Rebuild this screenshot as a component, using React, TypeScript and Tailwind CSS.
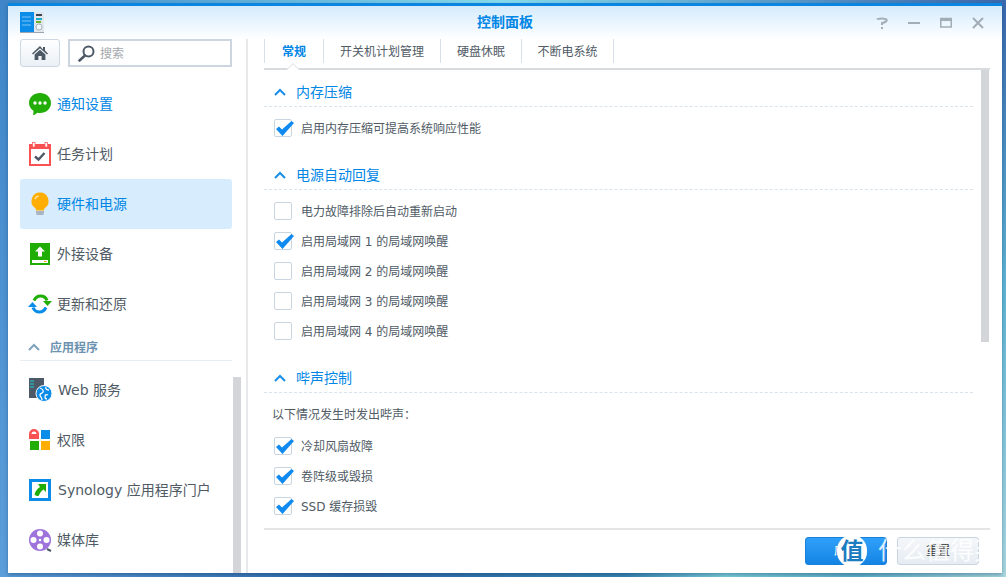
import React from "react";

const Chevron = ({ className }: { className: string }) => (
  <svg width="12" height="8" viewBox="0 0 12 8" className={className} fill="none">
    <path d="M1 7L6 2l5 5" stroke="currentColor" strokeWidth="2" />
  </svg>
);

const Logo = () => (
  <svg width="24" height="21" viewBox="0 0 24 21" className="-ml-[6px]">
    <rect x="0" y="0" width="24" height="21" fill="#dfe6ec" />
    <rect x="0" y="0" width="14" height="20" fill="#0a8ce8" />
    <path d="M2 5h9M2 9h9M2 13h9" stroke="#7cc4f6" />
    <path d="M16 3h6" stroke="#3b4652" strokeWidth="2" />
    <path d="M16 7h6" stroke="#18a8c8" strokeWidth="2" />
    <path d="M16 10h5" stroke="#6cb02c" strokeWidth="2" />
    <circle cx="19" cy="15" r="3" fill="#f4f7fa" stroke="#aab4bd" />
    <rect x="0" y="20" width="24" height="1" fill="#9ba6b0" />
  </svg>
);

const HomeIcon = () => (
  <svg width="16" height="16" viewBox="0 0 16 16" fill="#4d5966">
    <path d="M8 1L0 8.400l1 1L8 3.200l7 6.200 1-1-3-2.800V2h-2v2.400z" />
    <path d="M2.600 9.600L8 4.800l5.400 4.800V15H9.600v-4H6.400v4H2.600z" />
  </svg>
);

const SearchIcon = () => (
  <svg width="17" height="17" viewBox="0 0 17 17" fill="none">
    <circle cx="10.500" cy="6.500" r="5" stroke="#4d5966" strokeWidth="2" />
    <path d="M7 10.500L1.500 15.500" stroke="#4d5966" strokeWidth="2.600" strokeLinecap="round" />
  </svg>
);

const Bubble = () => (
  <svg width="24" height="24" viewBox="0 0 24 24">
    <path d="M12 1c6 0 11 4 11 10s-5 10-11 10c-1 0-2 0-3-.3C8 22 6 23 5 23.300c.4-1.200.6-3 .4-4.500C2.800 17 1 14.200 1 11 1 5 6 1 12 1z" fill="#22ad08" />
    <circle cx="7" cy="11" r="1.700" fill="#fff" /><circle cx="12" cy="11" r="1.700" fill="#fff" /><circle cx="17" cy="11" r="1.700" fill="#fff" />
  </svg>
);

const Calendar = () => (
  <svg width="24" height="24" viewBox="0 0 24 24">
    <rect x="1" y="2" width="22" height="22" fill="#fa5252" />
    <rect x="3" y="7" width="18" height="15" fill="#fff" />
    <rect x="4.500" y="0.500" width="2.500" height="4.500" fill="#fff" stroke="#fa5252" strokeWidth="0.700" />
    <rect x="17" y="0.500" width="2.500" height="4.500" fill="#fff" stroke="#fa5252" strokeWidth="0.700" />
    <path d="M7 14.500l3.500 3 6-6.500" stroke="#4d5966" strokeWidth="2.400" fill="none" />
  </svg>
);

const Bulb = () => (
  <svg width="24" height="24" viewBox="0 0 24 24">
    <path d="M12 0.500a8.500 8.500 0 0 0-5 15.400c.8.700 1 1.600 1 2.600h8c0-1 .2-1.900 1-2.600A8.500 8.500 0 0 0 12 .500z" fill="#ffae00" />
    <path d="M7 7c.6-1.700 2-2.700 3.500-3" stroke="#ffe7a8" strokeWidth="1.500" fill="none" />
    <path d="M8 20h8M8.500 22h7" stroke="#9aa3ad" strokeWidth="1.300" />
  </svg>
);

const External = () => (
  <svg width="24" height="24" viewBox="0 0 24 24">
    <rect x="2" y="1" width="20" height="22" fill="#20ad06" />
    <path d="M12 4.500l5 5h-3v5h-4v-5H7z" fill="#fff" />
    <rect x="4" y="18" width="16" height="3" fill="#fff" />
    <rect x="16" y="19" width="2.500" height="1" fill="#f0a000" />
  </svg>
);

const Sync = () => (
  <svg width="24" height="24" viewBox="0 0 24 24" fill="none">
    <path d="M6 8.500C7.500 5.500 10 4 12.500 4c3 0 5.500 1.700 6.500 4.500" stroke="#20ad06" strokeWidth="3" />
    <path d="M15 9h9l-4.500 5z" fill="#20ad06" />
    <path d="M18 15.500C16.500 18.500 14 20 11.500 20c-3 0-5.500-1.700-6.500-4.500" stroke="#0a8ce8" strokeWidth="3" />
    <path d="M0 15h9l-4.500-5z" fill="#0a8ce8" />
  </svg>
);

const WebIcon = () => (
  <svg width="24" height="24" viewBox="0 0 24 24">
    <rect x="1" y="0" width="15" height="20" fill="#4d5966" />
    <path d="M2 3h4M2 6h4M2 9h4" stroke="#1ad0d0" />
    <circle cx="16" cy="15.500" r="8" fill="#0a8ce8" stroke="#fff" />
    <path d="M12 10c2 1 4 2 3 4s-3 1-3 3 2 2 2 5M18 9c-1 2 1 3 3 3M20 17c-2-1-3 0-3 2s1 2 2 2" stroke="#fff" strokeWidth="1.300" fill="none" />
  </svg>
);

const Perm = () => (
  <svg width="24" height="24" viewBox="0 0 24 24">
    <path d="M1 11V6a5 5 0 0 1 10 0v5z" fill="#fa5252" />
    <path d="M3.500 6a2.500 2.500 0 0 1 5 0z" fill="#fff" />
    <rect x="13" y="2" width="9" height="9" fill="#0a8ce8" />
    <rect x="2" y="13" width="9" height="9" fill="#20ad06" />
    <rect x="13" y="13" width="9" height="9" fill="#ffae00" />
  </svg>
);

const Portal = () => (
  <svg width="24" height="24" viewBox="0 0 24 24">
    <rect x="1" y="1" width="22" height="22" fill="#0a8ce8" />
    <rect x="4" y="4" width="16" height="16" fill="#fff" />
    <path d="M18 6v8l-2.500-2.500C13 13 12 15 10.500 18 9 18 7.500 17.500 6.500 16.500c1-3.500 3-6 5.500-7.500L10 6z" fill="#20ad06" />
  </svg>
);

const Media = () => (
  <svg width="24" height="24" viewBox="0 0 24 24">
    <circle cx="12" cy="12" r="11" fill="#9f73dc" />
    <circle cx="12" cy="5.500" r="3" fill="#fff" /><circle cx="12" cy="18.500" r="3" fill="#fff" />
    <circle cx="5.500" cy="12" r="3" fill="#fff" /><circle cx="18.500" cy="12" r="3" fill="#fff" />
    <circle cx="12" cy="12" r="1.300" fill="#fff" />
    <path d="M19 21l4 2" stroke="#4d5966" strokeWidth="2" />
  </svg>
);

const NavItem = ({ icon, label, active, blue, latin }: { icon: React.ReactNode; label: string; active?: boolean; blue?: boolean; latin?: boolean }) => (
  <div className={`flex h-[50px] items-center rounded-[3px] pl-2 text-[14px] ${active ? "bg-[#d7ecfd] text-[#0086e5]" : blue ? "text-[#0086e5]" : "text-[#505b66]"}`}>
    <span className="flex w-6 shrink-0 items-center justify-center">{icon}</span>
    <span className={`whitespace-nowrap ${latin ? "ml-[6px]" : "ml-[5px]"}`}>{label}</span>
  </div>
);

const Check = ({ label, on }: { label: string; on?: boolean }) => (
  <div className="flex h-[30px] items-center pl-[10px] text-[12px] text-[#505b66]">
    <span className="relative h-[18px] w-[18px] shrink-0 rounded-[2px] border border-[#c9d5e1] bg-white">
      {on && (
        <svg width="18" height="15" viewBox="0 0 18 15" className="absolute left-[1px] top-[1px] max-w-none">
          <path d="M0 8l3-2.500 3 3L15.500 0 18 2 6.500 15z" fill="#0f8af0" />
        </svg>
      )}
    </span>
    <span className="ml-[9px] whitespace-nowrap pt-[2px]">{label}</span>
  </div>
);

const SectionHead = ({ label }: { label: string }) => (
  <div className="mr-[17px] flex h-[29px] items-center border-b border-dashed border-[#d8e3ee] text-[14px] text-[#0086e5]">
    <Chevron className="ml-[10px] text-[#1a8fe8]" />
    <span className="ml-[10px]">{label}</span>
  </div>
);

const Tab = ({ label, className }: { label: string; className: string }) => (
  <div className={`flex h-[24px] items-center justify-center border-l border-[#d6e0ea] whitespace-nowrap pt-[2px] ${className}`}>{label}</div>
);

export default function App() {
  return (
    <div className="relative h-[577px] w-[1006px] overflow-hidden pb-[4px] pl-[8px] pr-[4px] pt-[3px] font-['DejaVu_Sans','Noto_Sans_CJK_SC',sans-serif]">
      <div className="absolute inset-y-0 left-0 w-[10px] bg-gradient-to-b from-[#3f86c8] to-[#5c9edb]" />
      <div className="absolute inset-y-0 right-0 w-[10px] bg-gradient-to-b from-[#3a68ad] via-[#5fb6d6] to-[#a9d8e0]" />
      <div className="absolute inset-x-0 top-0 h-[4px] bg-gradient-to-r from-[#3f86c8] via-[#86dcec] to-[#3a68ad]" />
      <div className="absolute inset-x-0 bottom-0 h-[5px] bg-[linear-gradient(to_right,#5c9edb_0%,#2f6bab_35%,#3a86b4_62%,#7fcfdc_72%,#5fb0c8_85%,#a9d8e0_100%)]" />

      <div className="relative flex h-[570px] flex-col overflow-hidden border-t-[3px] border-[#0a86e0] bg-white shadow-[0_2px_4px_rgba(0,40,80,0.35)]">
        <div className="absolute inset-x-0 top-0 h-[33px] bg-gradient-to-b from-[#d4ebfd] to-white" />

        <div className="relative grid h-[33px] shrink-0 grid-cols-[1fr_auto_1fr] items-center px-[18px]">
          <Logo />
          <div className="text-center text-[14px] font-bold text-[#0086e5]">控制面板</div>
          <div className="flex w-[108px] items-center justify-between justify-self-end text-[#a3adb6]">
            <svg width="12" height="12" viewBox="0 0 12 12" fill="none"><path d="M1 2.500C2 1 9.500 1 10.500 2.500c.8 1.500-1.500 3-4.500 3.500v2" stroke="currentColor" strokeWidth="2" /><rect x="5" y="10" width="2" height="2" fill="currentColor" /></svg>
            <svg width="12" height="12" viewBox="0 0 12 12"><rect x="0" y="5" width="12" height="2" fill="currentColor" /></svg>
            <svg width="12" height="12" viewBox="0 0 12 12" fill="none"><rect x="0.750" y="1.500" width="10.500" height="8.500" stroke="currentColor" strokeWidth="1.500" /><rect x="0" y="1" width="12" height="3" fill="currentColor" /></svg>
            <svg width="12" height="12" viewBox="0 0 12 12" fill="none"><path d="M1 1l10 10M11 1L1 11" stroke="currentColor" strokeWidth="2" /></svg>
          </div>
        </div>

        <div className="relative flex min-h-0 flex-1">
          <aside className="relative w-[240px] shrink-0 overflow-hidden border-r-[2px] border-[#e6e8ea] pl-[12px] pr-[14px]">
            <div className="flex h-[28px] gap-2">
              <div className="flex w-[40px] items-center justify-center rounded-[3px] border border-[#ccd8e4] bg-gradient-to-b from-white to-[#eaf0f6]">
                <HomeIcon />
              </div>
              <div className="flex flex-1 items-center border-2 border-[#ccd5e0] pl-[8px] text-[12px] text-[#a3a8ad]">
                <SearchIcon />
                <span className="ml-[5px] pt-[2px]">搜索</span>
              </div>
            </div>
            <div className="mt-[12px]">
              <NavItem icon={<Bubble />} label="通知设置" blue />
              <NavItem icon={<Calendar />} label="任务计划" />
              <NavItem icon={<Bulb />} label="硬件和电源" active />
              <NavItem icon={<External />} label="外接设备" />
              <NavItem icon={<Sync />} label="更新和还原" />
            </div>
            <div className="mt-[4px] flex h-[28px] items-center border-b border-[#e6edf3] pl-2 text-[12px] font-bold text-[#6c92b0]">
              <Chevron className="text-[#7fa2bd]" />
              <span className="ml-[10px] pt-[2px]">应用程序</span>
            </div>
            <div className="mt-[4px]">
              <NavItem icon={<WebIcon />} label="Web 服务" latin />
              <NavItem icon={<Perm />} label="权限" />
              <NavItem icon={<Portal />} label="Synology 应用程序门户" latin />
              <NavItem icon={<Media />} label="媒体库" />
            </div>
            <div className="absolute bottom-0 right-[5px] h-[196px] w-[8px] bg-[#d3d5d8]" />
          </aside>

          <main className="relative flex min-w-0 flex-1 flex-col pl-[16px] pr-[12px]">
            <div className="relative flex h-[31px] shrink-0 border-b-2 border-[#d9dcdf] text-[12px] text-[#505b66]">
              <Tab label="常规" className="w-[59px] font-bold text-[#0086e5]" />
              <Tab label="开关机计划管理" className="w-[117px]" />
              <Tab label="硬盘休眠" className="w-[81px]" />
              <Tab label="不断电系统" className="w-[93px] border-r" />
              <svg width="14" height="7" viewBox="0 0 14 7" className="absolute -bottom-[2px] left-[22px]">
                <path d="M0 7L7 0l7 7z" fill="#fff" />
                <path d="M0 6.500h1L7 .700l6 5.800h1" stroke="#d9dcdf" fill="none" />
              </svg>
            </div>

            <div className="relative min-h-0 flex-1 overflow-hidden pt-[8px]">
              <SectionHead label="内存压缩" />
              <div className="mb-[18px] pt-[6px]">
                <Check label="启用内存压缩可提高系统响应性能" on />
              </div>
              <SectionHead label="电源自动回复" />
              <div className="mb-[18px] pt-[6px]">
                <Check label="电力故障排除后自动重新启动" />
                <Check label="启用局域网 1 的局域网唤醒" on />
                <Check label="启用局域网 2 的局域网唤醒" />
                <Check label="启用局域网 3 的局域网唤醒" />
                <Check label="启用局域网 4 的局域网唤醒" />
              </div>
              <SectionHead label="哔声控制" />
              <div className="pt-[6px]">
                <div className="flex h-[30px] items-center pl-[8px] pt-[2px] text-[12px] text-[#505b66]">以下情况发生时发出哔声：</div>
                <div className="mt-[2px]">
                  <Check label="冷却风扇故障" on />
                  <Check label="卷阵级或毁损" on />
                  <Check label="SSD 缓存损毁" on />
                </div>
              </div>
              <div className="absolute right-0 top-0 mr-px h-[272px] w-[8px] bg-[#d3d5d8]" />
            </div>

            <div className="flex h-[45px] shrink-0 items-start justify-end gap-[10px] border-t-2 border-[#e3e5e7] pr-[11px] pt-[7px] text-[12px]">
              <div className="flex h-[28px] w-[82px] items-center justify-center rounded-[3px] border border-[#1a80d8] bg-gradient-to-b from-[#2fa0fa] to-[#1484e4] text-white">应用</div>
              <div className="flex h-[28px] w-[82px] items-center justify-center rounded-[3px] border border-[#c9d5e1] bg-gradient-to-b from-[#f4f7fa] to-[#e6ecf2] text-[#333]">重置</div>
            </div>
          </main>
        </div>
      </div>

      <div className="absolute bottom-[10px] left-[837px] flex h-[32px] items-center">
        <div className="flex h-[32px] w-[30px] items-center justify-center rounded-full bg-white text-[23px] font-bold leading-none text-[#1c7cc0]">值</div>
        <div className="ml-[11px] whitespace-nowrap text-[24px] leading-none text-white/85">什么值得买</div>
      </div>
    </div>
  );
}
